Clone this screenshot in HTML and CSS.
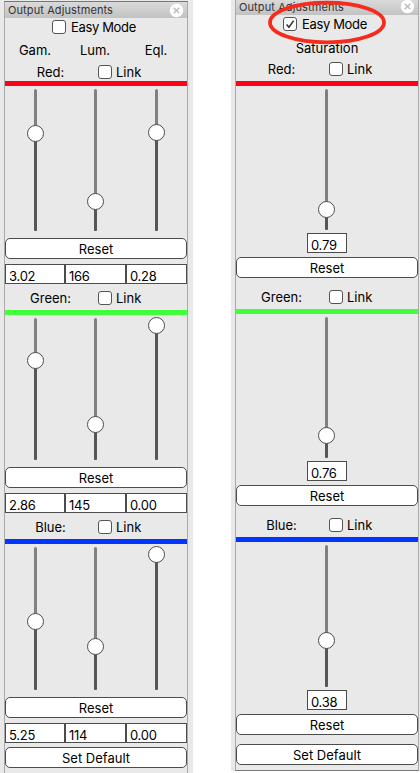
FILE: index.html
```html
<!DOCTYPE html>
<html lang="en">
<head>
<meta charset="utf-8">
<title>Output Adjustments</title>
<link rel="stylesheet" href="styles.css">
</head>
<body>
<main class="stage" id="stage"></main>
<script src="app.js"></script>
</body>
</html>
```
FILE: styles.css
```css
* { box-sizing: border-box; }
body { margin: 0; background: #fff; color: #000; font: 13px/16px Inter, "Liberation Sans", sans-serif; }
.stage { display: flex; justify-content: space-between; width: 420px; height: 773px; overflow: hidden; }
.window { background: #e9e9e9; }
.window.full { width: 193px; height: 773px; padding: 0 5px 0 4px; border-top: 1px solid #e9e9e9; }
.window.easy { width: 189px; height: 771px; padding-left: 4px; }
.panel { width: 184px; border: solid #a9a9a9; border-width: 0 1px; display: flex; flex-direction: column; }
.full .panel { height: 772px; border-top: 1px solid #777; }
.easy .panel { height: 771px; border-bottom: 1px solid #777; }
.title { display: flex; align-items: center; justify-content: space-between; background: linear-gradient(#dadada, #c2c2c2); color: #333; font-size: 11px; letter-spacing: .1px; padding: 0 3px; flex: none; }
.full .title { height: 16px; }
.easy .title { height: 15px; padding-bottom: 2px; }
.title svg { width: 15px; height: 15px; flex: none; }
.mode { display: flex; align-items: center; gap: 5px; height: 18px; padding-left: 47px; letter-spacing: -.35px; flex: none; }
.box { width: 14px; height: 14px; border: 1px solid #555; border-radius: 3px; background: #fff; flex: none; }
.box svg { display: block; width: 12px; height: 12px; }
.heads { display: grid; text-align: center; flex: none; }
.full .heads { grid-template-columns: 60px 60px 62px; height: 16px; margin-top: 6px; }
.easy .heads { height: 16px; margin-top: 7px; }
.row { display: grid; grid-template-columns: 91px 1fr; align-items: center; text-align: center; height: 14px; line-height: 14px; flex: none; }
.full .row.first { margin-top: 7px; }
.easy .row.first { margin-top: 6px; }
.link { display: flex; align-items: center; gap: 4px; padding-left: 2px; }
.bar { height: 5px; flex: none; margin-top: 5px; }
.red { background: #ff0019; }
.green { background: #42ff3c; }
.blue { background: #0036ff; }
.full .first + .bar { margin-top: 2px; }
.sliders { display: grid; margin-top: 3px; height: 142px; flex: none; }
.full .sliders { grid-template-columns: 61px 59px 63px; }
.easy .sliders { height: 141px; padding-right: 1px; }
.full .blue + .sliders { height: 143px; }
.easy .blue + .sliders { height: 142px; }
.slider { position: relative; width: 3px; height: 100%; border-radius: 2px; background: #808080; justify-self: center; }
.fill { position: absolute; inset: auto 0 0; border-radius: 0 0 2px 2px; background: #565656; }
.knob { position: absolute; left: -7px; width: 17px; height: 17px; border: 1px solid #4c4c4c; border-radius: 50%; background: #fff; }
.btn { font: inherit; color: inherit; height: 21px; border: 1px solid #4c4c4c; border-radius: 5px; background: #fff; padding: 1px 0 0; flex: none; text-align: center; }
.fields { display: grid; flex: none; height: 20px; }
.full .fields { grid-template-columns: 60px 61px 61px; margin-top: 5px; }
.field { border: 1px solid #4c4c4c; background: #fff; padding: 4px 0 0 3px; line-height: 15px; letter-spacing: -.25px; overflow: hidden; }
.full .btn { margin-top: 7px; }
.easy .fields { width: 40px; margin: 3px auto 0; }
.easy .btn { margin-top: 4px; }
.full .row:not(.first) { margin-top: 7px; }
.easy .row:not(.first) { margin-top: 12px; }
.full .default { margin-top: 4px; }
.easy .default { margin-top: 9px; }
.callout { position: absolute; left: 267px; top: 0; width: 120px; height: 46px; }
```
FILE: app.js
```js
const close = '<svg viewBox="0 0 15 15"><circle cx="7.5" cy="7.5" r="6.7" fill="#fff"/><path d="M4.7 4.7l5.6 5.6M10.3 4.7l-5.6 5.6" stroke="#bcbcbc" stroke-width="1.4"/></svg>';
const check = '<svg viewBox="0 0 12 12"><path d="M2.6 6.4L5 9.2L9.6 2.6" fill="none" stroke="#333" stroke-width="1.6"/></svg>';

const panels = [
  { kind: 'full', checked: false, heads: ['Gam.', 'Lum.', 'Eql.'], channels: [
    { name: 'Red', knobs: [44.5, 112.5, 43.5], values: ['3.02', '166', '0.28'] },
    { name: 'Green', knobs: [42.5, 106.5, 7.5], values: ['2.86', '145', '0.00'] },
    { name: 'Blue', knobs: [74.5, 99.5, 7.5], values: ['5.25', '114', '0.00'] } ] },
  { kind: 'easy', checked: true, heads: ['Saturation'], channels: [
    { name: 'Red', knobs: [120.5], values: ['0.79'] },
    { name: 'Green', knobs: [118.5], values: ['0.76'] },
    { name: 'Blue', knobs: [95.5], values: ['0.38'] } ] }
];

const slider = y => `<div class="slider"><div class="fill" style="top:${y}px"></div><div class="knob" style="top:${y - 8.5}px"></div></div>`;

const channel = (c, i, kind) => {
  const fields = `<div class="fields">${c.values.map(v => `<div class="field">${v}</div>`).join('')}</div>`;
  const reset = '<button class="btn">Reset</button>';
  return `<div class="row ${i ? '' : 'first'}"><span>${c.name}:</span><label class="link"><span class="box"></span><span>Link</span></label></div>
    <div class="bar ${c.name.toLowerCase()}"></div>
    <div class="sliders">${c.knobs.map(slider).join('')}</div>
    ${kind === 'full' ? reset + fields : fields + reset}`;
};

document.getElementById('stage').innerHTML = panels.map(p => `<section class="window ${p.kind}"><div class="panel">
  <header class="title"><span>Output Adjustments</span>${close}</header>
  <label class="mode"><span class="box">${p.checked ? check : ''}</span><span>Easy Mode</span></label>
  <div class="heads">${p.heads.map(h => `<span>${h}</span>`).join('')}</div>
  ${p.channels.map((c, i) => channel(c, i, p.kind)).join('')}
  <button class="btn default">Set Default</button>
</div></section>`).join('') +
'<svg class="callout" viewBox="0 0 120 46"><ellipse cx="60" cy="22.5" rx="57" ry="19.8" fill="none" stroke="#f52c1d" stroke-width="3.8"/></svg>';
```
